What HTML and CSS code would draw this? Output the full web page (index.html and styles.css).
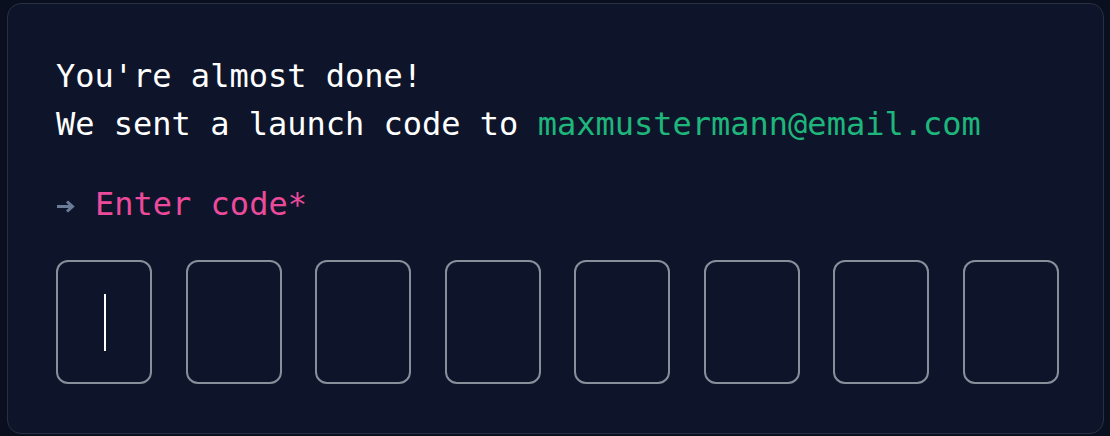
FILE: index.html
```html
<!DOCTYPE html>
<html lang="en">
<head>
<meta charset="utf-8">
<title>Enter code</title>
<link rel="stylesheet" href="styles.css">
</head>
<body>
<main class="card">
  <p class="intro">You're almost done!<br>We sent a launch code to <span class="email">maxmustermann@email.com</span></p>
  <p class="label"><svg class="arrow" width="19" height="14" viewBox="0 0 19 14" aria-hidden="true"><path d="M1 7.5H16M11 2.5L16.5 7.5L11 12.5" fill="none" stroke="#6b7c99" stroke-width="3" stroke-linejoin="miter"/></svg><span class="prompt">Enter code*</span></p>
  <div class="code">
    <div class="digit active"><span class="caret"></span></div>
    <div class="digit"></div>
    <div class="digit"></div>
    <div class="digit"></div>
    <div class="digit"></div>
    <div class="digit"></div>
    <div class="digit"></div>
    <div class="digit"></div>
  </div>
</main>
</body>
</html>
```
FILE: styles.css
```css
html, body {
  margin: 0;
  height: 100%;
}
body {
  background: #0a0f1f;
  padding: 3px 6px 2px 7px;
  box-sizing: border-box;
  font-family: "DejaVu Sans Mono", "Liberation Mono", monospace;
}
.card {
  box-sizing: border-box;
  height: 431px;
  background: #0e152a;
  border: 1px solid #283044;
  border-radius: 14px;
  padding: 48px 44px 0 48px;
}
.intro {
  margin: 0;
  font-size: 32px;
  line-height: 48px;
  color: #ffffff;
}
.email {
  color: #1fb67c;
}
.label {
  margin: 32px 0 0;
  font-size: 32px;
  line-height: 48px;
  display: flex;
  align-items: center;
}
.arrow {
  display: block;
  width: 19px;
  height: 14px;
  margin-top: 4px;
  margin-right: 20px;
}
.prompt {
  color: #ec4a9c;
}
.code {
  margin-top: 32px;
  display: flex;
  justify-content: space-between;
  width: 1003px;
}
.digit {
  box-sizing: border-box;
  width: 96px;
  height: 124px;
  border: 2px solid #888f9b;
  border-radius: 12px;
  display: flex;
  align-items: center;
  justify-content: center;
}
.caret {
  display: block;
  width: 2px;
  height: 57px;
  margin-left: 2px;
  background: #ffffff;
}
```
